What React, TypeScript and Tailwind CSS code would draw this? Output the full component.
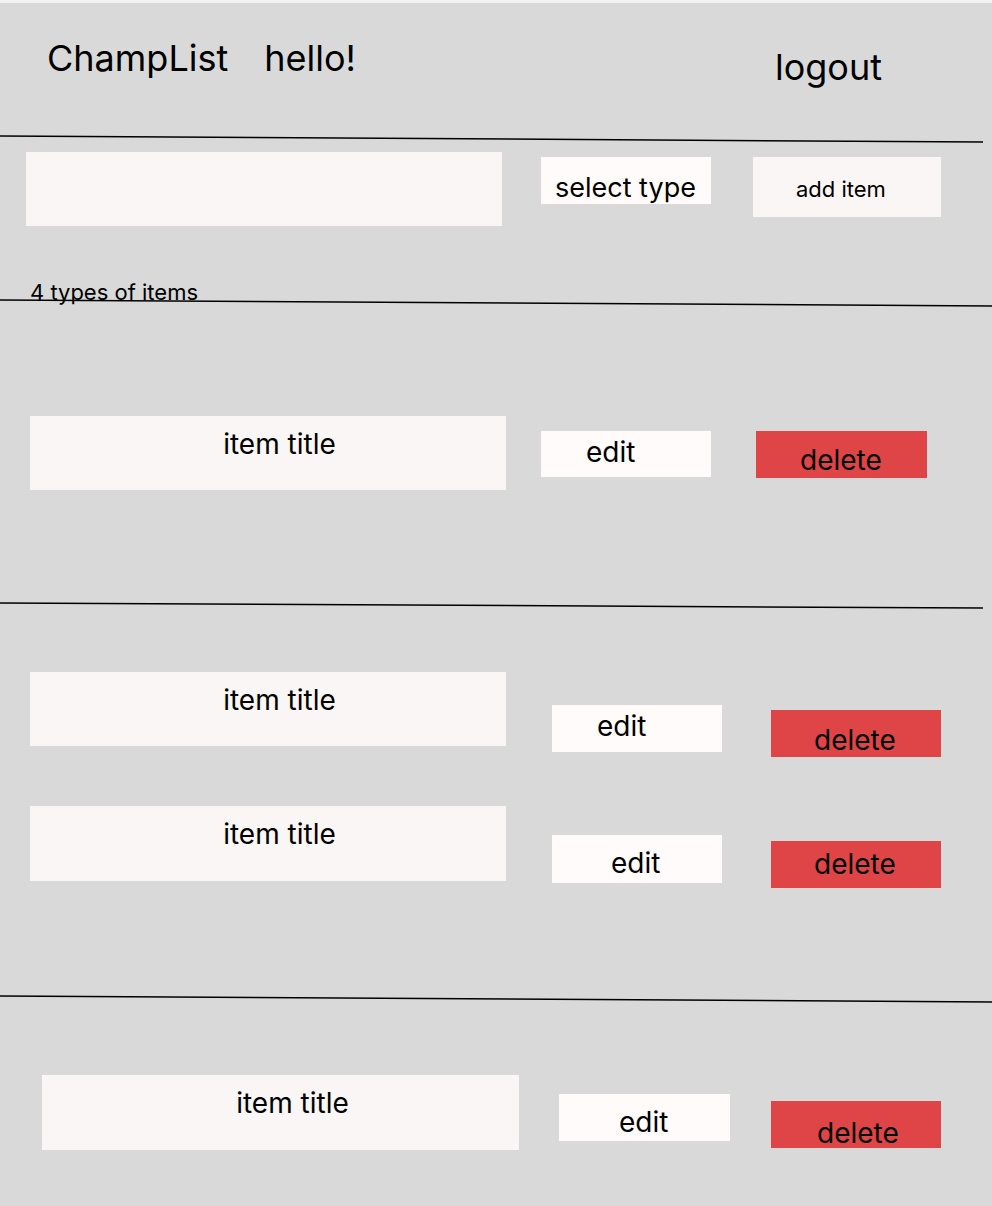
import React from "react";

function Divider({ y1, y2, x2, h }: { y1: number; y2: number; x2: number; h: string }) {
  return (
    <svg className={`block w-[992px] shrink-0 ${h}`} viewBox={`0 0 992 ${y2 + 3}`} preserveAspectRatio="none">
      <line x1="0" y1={y1} x2={x2} y2={y2} stroke="#000" strokeWidth="1.5" />
    </svg>
  );
}

export default function App() {
  return (
    <div className="w-[992px] h-[1206px] bg-[#d9d9d9] overflow-hidden flex flex-col font-['Inter',sans-serif] text-black">
      <div className="h-[3px] shrink-0 bg-[#f2f2f2]" />

      {/* header */}
      <div className="h-[131px] shrink-0 flex items-start">
        <div className="ml-[47px] mt-[37px] text-[36px] leading-[36px]">ChampList</div>
        <div className="ml-[36px] mt-[37px] text-[36px] leading-[36px]">hello!</div>
        <div className="ml-auto mr-[110px] mt-[46px] text-[36px] leading-[36px]">logout</div>
      </div>

      <Divider y1={2} y2={8} x2={983} h="h-[11px]" />

      {/* toolbar */}
      <div className="flex flex-col shrink-0">
        <div className="flex items-start">
          <div className="ml-[26px] mt-[7px] w-[476px] h-[74px] bg-[#f9f6f5]" />
          <div className="ml-[39px] mt-[12px] w-[170px] h-[47px] bg-[#fffbfa] pt-[16.5px] pl-[14px] text-[27px] leading-[27px] whitespace-nowrap">
            select type
          </div>
          <div className="ml-[42px] mt-[12px] w-[188px] h-[60px] bg-[#f9f6f5] pt-[21px] pl-[43px] text-[22px] leading-[22px]">
            add item
          </div>
        </div>
        <div className="ml-[30px] mt-[55px] text-[22px] leading-[22px]">4 types of items</div>
      </div>

      <div className="-mt-[6px]">
        <Divider y1={3} y2={9} x2={992} h="h-[12px]" />
      </div>

      {/* section 1 */}
      <div className="h-[291px] shrink-0 flex flex-col">
        <div className="mt-[107px] flex items-start">
          <div className="ml-[30px] w-[476px] h-[74px] bg-[#f9f6f5] pt-[14px] pl-[23px] flex justify-center text-[28px] leading-[28px]">
            item title
          </div>
          <div className="ml-[35px] mt-[15px] w-[170px] h-[46px] bg-[#fffbfa] pt-[7px] pl-[45px] text-[28px] leading-[28px]">
            edit
          </div>
          <div className="ml-[45px] mt-[15px] w-[171px] h-[47px] bg-[#df4446] pt-[15px] pl-[44px] text-[28px] leading-[28px]">
            delete
          </div>
        </div>
      </div>

      <Divider y1={3} y2={8} x2={983} h="h-[11px]" />

      {/* section 2 */}
      <div className="h-[382px] shrink-0 flex flex-col">
        <div className="mt-[61px] h-[134px] shrink-0 flex items-start">
          <div className="ml-[30px] w-[476px] h-[74px] bg-[#f9f6f5] pt-[14px] pl-[23px] flex justify-center text-[28px] leading-[28px]">
            item title
          </div>
          <div className="ml-[46px] mt-[33px] w-[170px] h-[47px] bg-[#fffbfa] pt-[7px] pl-[45px] text-[28px] leading-[28px]">
            edit
          </div>
          <div className="ml-[49px] mt-[38px] w-[170px] h-[47px] bg-[#df4446] pt-[16px] pl-[43px] text-[28px] leading-[28px]">
            delete
          </div>
        </div>
        <div className="flex items-start">
          <div className="ml-[30px] w-[476px] h-[75px] bg-[#f9f6f5] pt-[14px] pl-[23px] flex justify-center text-[28px] leading-[28px]">
            item title
          </div>
          <div className="ml-[46px] mt-[29px] w-[170px] h-[48px] bg-[#fffbfa] pt-[14px] pl-[59px] text-[28px] leading-[28px]">
            edit
          </div>
          <div className="ml-[49px] mt-[35px] w-[170px] h-[47px] bg-[#df4446] pt-[9px] pl-[43px] text-[28px] leading-[28px]">
            delete
          </div>
        </div>
      </div>

      <Divider y1={3} y2={9} x2={992} h="h-[12px]" />

      {/* section 3 */}
      <div className="flex flex-col">
        <div className="mt-[70px] flex items-start">
          <div className="ml-[42px] w-[477px] h-[75px] bg-[#f9f6f5] pt-[14px] pl-[24px] flex justify-center text-[28px] leading-[28px]">
            item title
          </div>
          <div className="ml-[40px] mt-[19px] w-[171px] h-[47px] bg-[#fffbfa] pt-[14px] pl-[60px] text-[28px] leading-[28px]">
            edit
          </div>
          <div className="ml-[41px] mt-[26px] w-[170px] h-[47px] bg-[#df4446] pt-[18px] pl-[46px] text-[28px] leading-[28px]">
            delete
          </div>
        </div>
      </div>
    </div>
  );
}
